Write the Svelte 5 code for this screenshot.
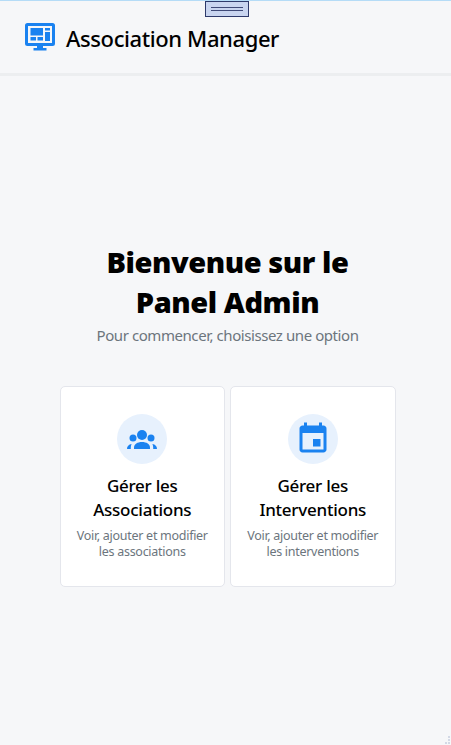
<script>
  const cards = [
    { title: ['Gérer les', 'Associations'], desc: ['Voir, ajouter et modifier', 'les associations'], icon: 'people' },
    { title: ['Gérer les', 'Interventions'], desc: ['Voir, ajouter et modifier', 'les interventions'], icon: 'calendar' }
  ];
</script>

<div class="page">
  <div class="handle" aria-hidden="true"><span></span></div>
  <header class="header">
    <svg class="logo" viewBox="0 0 30 28" width="30" height="28" aria-hidden="true">
      <path fill="#1a82f0" fill-rule="evenodd" d="M2.500 0h25A2.500 2.500 0 0 1 30 2.500v18a2.500 2.500 0 0 1-2.500 2.500H18v2h3.500v2.500h-13V25H12v-2H2.500A2.500 2.500 0 0 1 0 20.500v-18A2.500 2.500 0 0 1 2.500 0zM3 3v17h24V3zM5.500 5H18v7.500H5.500zM20 5h5v2.500h-5zM20 9h5v9h-5zM5.500 14H11v3.500H5.500zM12.500 14H18v3.500h-5.500z"/>
    </svg>
    <h1 class="brand">Association Manager</h1>
  </header>

  <main class="main">
    <h2 class="title">Bienvenue sur le<br />Panel Admin</h2>
    <p class="subtitle">Pour commencer, choisissez une option</p>
    <div class="cards">
      {#each cards as card}
        <article class="card">
          <div class="badge">
            {#if card.icon === 'people'}
              <svg viewBox="0 0 30 19" width="30" height="19" aria-hidden="true">
                <g fill="#1a82f0">
                  <circle cx="15" cy="5" r="5" />
                  <circle cx="6" cy="8" r="3.500" />
                  <circle cx="24" cy="8" r="3.500" />
                  <path d="M7 19v-1.500C7 14.200 10.500 12 15 12s8 2.200 8 5.500V19z" />
                  <path d="M0 19c0-2.800 1.700-4.500 4.600-5-.500 1.100-.800 2.300-.800 3.500V19z" />
                  <path d="M30 19c0-2.800-1.700-4.500-4.600-5 .500 1.100.800 2.300.800 3.500V19z" />
                </g>
              </svg>
            {:else}
              <svg viewBox="0 0 24 24" width="36" height="36" aria-hidden="true">
                <path fill="#1a82f0" d="M17 12h-5v5h5v-5zM16 1v2H8V1H6v2H5c-1.110 0-1.990.900-1.990 2L3 19c0 1.100.890 2 2 2h14c1.100 0 2-.900 2-2V5c0-1.100-.900-2-2-2h-1V1h-2zm3 18H5V8h14v11z"/>
              </svg>
            {/if}
          </div>
          <h3 class="card-title">{card.title[0]}<br />{card.title[1]}</h3>
          <p class="card-desc">{card.desc[0]}<br />{card.desc[1]}</p>
        </article>
      {/each}
    </div>
  </main>

  <svg class="grip" viewBox="0 0 9 9" width="9" height="9" aria-hidden="true">
    <g fill="#d3d9e6">
      <rect x="6" y="0" width="2" height="2" />
      <rect x="6" y="3" width="2" height="2" />
      <rect x="3" y="6" width="2" height="2" />
      <rect x="6" y="6" width="2" height="2" />
    </g>
  </svg>
</div>

<style>
  :global(body) {
    margin: 0;
    background: #f6f7f9;
  }
  .page {
    position: relative;
    height: 745px;
    overflow: hidden;
    border-top: 1px solid #b5dcf7;
    box-sizing: border-box;
    font-family: "Noto Sans", "Open Sans", sans-serif;
    color: #000;
  }
  .handle {
    position: absolute;
    top: 0;
    left: 205px;
    width: 44px;
    height: 16px;
    box-sizing: border-box;
    background: #c9d5f0;
    border: 1px solid #2e3a6b;
    display: flex;
    align-items: center;
    justify-content: center;
  }
  .handle span {
    width: 32px;
    height: 4px;
    box-sizing: border-box;
    border-top: 1px solid #3f4a78;
    border-bottom: 1px solid #3f4a78;
  }
  .grip {
    position: absolute;
    right: 0;
    bottom: 0;
  }
  .header {
    height: 75px;
    box-sizing: border-box;
    border-bottom: 3px solid #eceef0;
    display: flex;
    align-items: center;
    gap: 11px;
    padding: 0 0 0 25px;
  }
  .brand {
    margin: 2px 0 0;
    font-size: 22px;
    font-weight: 500;
    letter-spacing: -0.4px;
    color: #000;
  }
  .main {
    display: flex;
    flex-direction: column;
    align-items: center;
    padding: 166px 0 0 4px;
  }
  .title {
    margin: 0;
    font-size: 29px;
    line-height: 40px;
    font-weight: 900;
    letter-spacing: -0.45px;
    text-align: center;
  }
  .subtitle {
    margin: 3px 0 0;
    font-size: 15px;
    line-height: 20px;
    letter-spacing: -0.43px;
    color: #6c757d;
  }
  .cards {
    display: flex;
    gap: 5px;
    margin-top: 41px;
  }
  .card {
    width: 165.500px;
    height: 201px;
    box-sizing: border-box;
    background: #fff;
    border: 1px solid #e4e6ec;
    border-radius: 5px;
    display: flex;
    flex-direction: column;
    align-items: center;
    padding-top: 27px;
    text-align: center;
  }
  .badge {
    width: 50px;
    height: 50px;
    border-radius: 50%;
    background: #e7f1fd;
    display: flex;
    align-items: center;
    justify-content: center;
  }
  .card-title {
    margin: 10px 0 0;
    font-size: 17px;
    line-height: 24px;
    font-weight: 500;
    letter-spacing: -0.25px;
  }
  .card-desc {
    margin: 6px 0 0;
    font-size: 12.500px;
    line-height: 16px;
    letter-spacing: -0.28px;
    color: #6c757d;
  }
</style>
